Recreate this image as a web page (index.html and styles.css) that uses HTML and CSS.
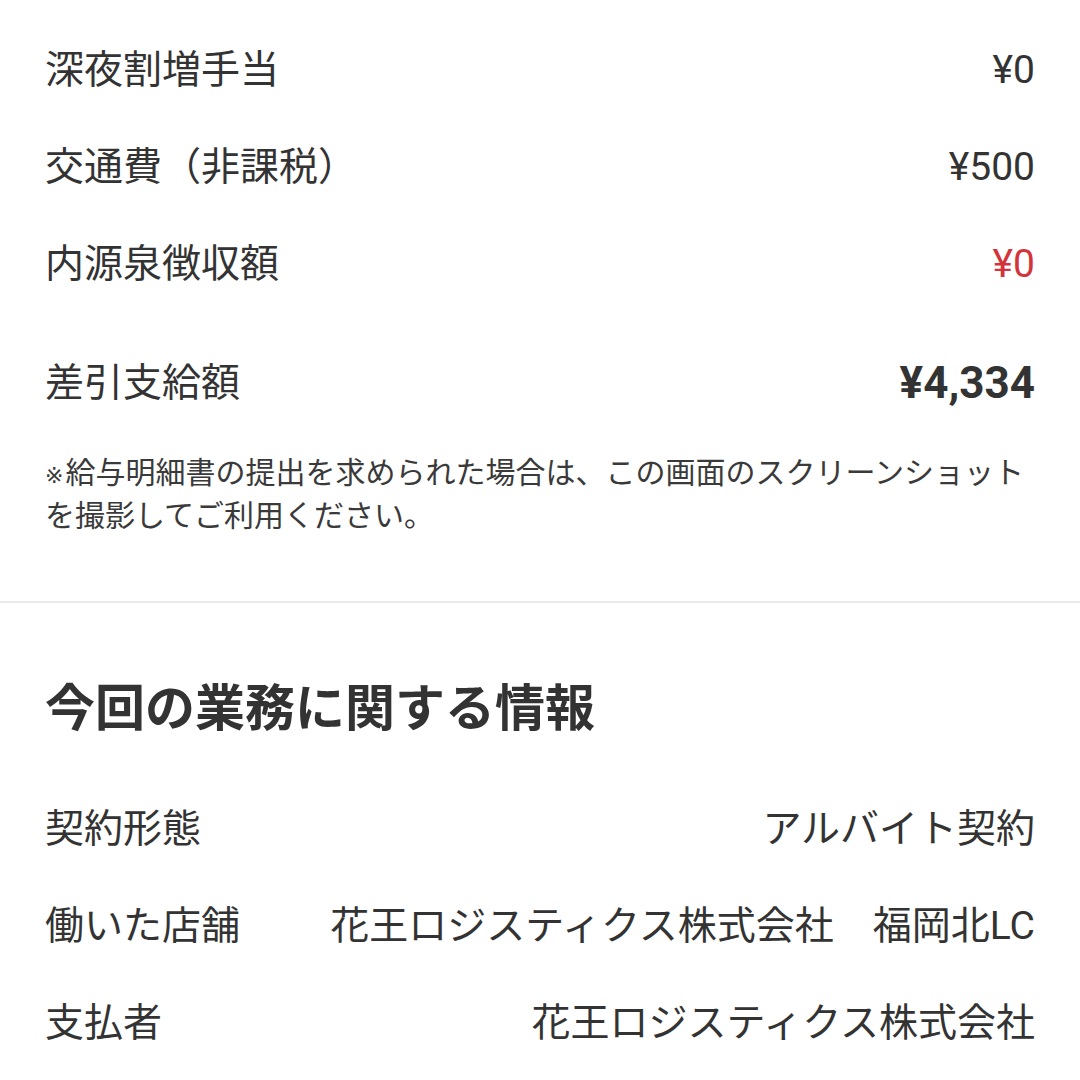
FILE: index.html
```html
<!DOCTYPE html>
<html lang="ja">
<head>
<meta charset="utf-8">
<title>給与明細</title>
<link rel="stylesheet" href="styles.css">
</head>
<body>
<main class="page">
  <section class="section pay">
    <div class="row">
      <span class="label">深夜割増手当</span>
      <span class="value">¥0</span>
    </div>
    <div class="row">
      <span class="label">交通費（非課税）</span>
      <span class="value">¥500</span>
    </div>
    <div class="row">
      <span class="label">内源泉徴収額</span>
      <span class="value value-red">¥0</span>
    </div>
    <div class="row row-total">
      <span class="label">差引支給額</span>
      <span class="value value-total">¥4,334</span>
    </div>
    <p class="note"><span class="mark">※</span>給与明細書の提出を求められた場合は、この画面のスクリーンショットを撮影してご利用ください。</p>
  </section>
  <hr class="divider">
  <section class="section info">
    <h2 class="heading">今回の業務に関する情報</h2>
    <div class="row">
      <span class="label">契約形態</span>
      <span class="value">アルバイト契約</span>
    </div>
    <div class="row">
      <span class="label">働いた店舗</span>
      <span class="value">花王ロジスティクス株式会社　福岡北LC</span>
    </div>
    <div class="row">
      <span class="label">支払者</span>
      <span class="value">花王ロジスティクス株式会社</span>
    </div>
  </section>
</main>
</body>
</html>
```

FILE: styles.css
```css
* {
  box-sizing: border-box;
}

html, body {
  margin: 0;
  padding: 0;
  background: #ffffff;
}

body {
  font-family: Roboto, "Noto Sans CJK JP", "Noto Sans", sans-serif;
  color: #333333;
  width: 1080px;
  height: 1080px;
  overflow: hidden;
}

.page {
  display: flex;
  flex-direction: column;
}

.section {
  padding: 0 45px;
  display: flex;
  flex-direction: column;
}

.pay {
  padding-top: 22px;
}

.row {
  display: flex;
  justify-content: space-between;
  align-items: center;
  height: 97px;
  font-size: 39px;
  line-height: 1.2;
}

.label {
  white-space: nowrap;
}

.value {
  white-space: nowrap;
  text-align: right;
}

.value-red {
  color: #d5333b;
}

.row-total {
  margin-top: 22px;
}

.value-total {
  font-size: 44px;
  font-weight: 700;
}

.note {
  margin: 19px 0 0;
  font-size: 30px;
  line-height: 43px;
  color: #3a3a3a;
}

.mark {
  font-family: "DejaVu Sans", "Noto Sans CJK JP", sans-serif;
  font-size: 22px;
  line-height: 1;
  margin-right: 2px;
}

.divider {
  margin: 64px 0 0;
  border: 0;
  height: 2px;
  background: #ebebeb;
}

.info {
  padding-top: 71px;
}

.heading {
  margin: 0 0 47px;
  font-family: "Noto Sans CJK JP", sans-serif;
  font-size: 50px;
  font-weight: 700;
  line-height: 60px;
  color: #333333;
}
```
